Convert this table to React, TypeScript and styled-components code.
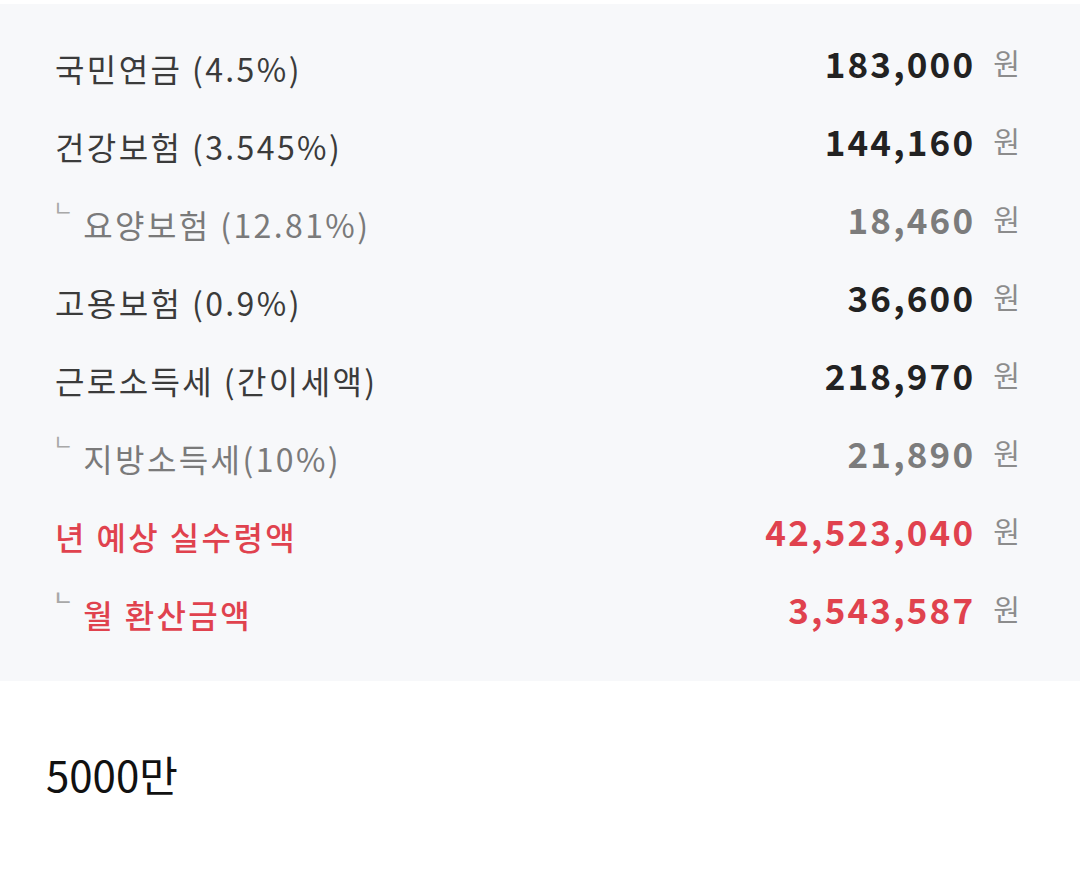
import * as React from 'react';
import styled, { createGlobalStyle } from 'styled-components';

const GlobalStyle = createGlobalStyle`
  html, body {
    margin: 0;
    padding: 0;
    background: #ffffff;
  }
  body {
    font-family: 'Noto Sans CJK KR', 'Noto Sans', sans-serif;
  }
`;

type Tone = 'main' | 'sub' | 'red';

const labelColor: Record<Tone, string> = {
  main: '#3b3b3b',
  sub: '#7a7a7a',
  red: '#e0424e',
};

const amountColor: Record<Tone, string> = {
  main: '#222222',
  sub: '#7c7c7c',
  red: '#e0424e',
};

const Panel = styled.section`
  margin-top: 4px;
  background-color: #f7f8fa;
  padding: 19px 60px 34px 55px;
`;

const Row = styled.div`
  display: flex;
  align-items: center;
  justify-content: space-between;
  height: 78px;
`;

const Label = styled.div<{ $tone: Tone }>`
  display: flex;
  align-items: flex-start;
  padding-top: 12px;
  font-size: 32px;
  letter-spacing: 2.4px;
  color: ${(p) => labelColor[p.$tone]};
  font-weight: ${(p) => (p.$tone === 'red' ? 500 : 400)};
  white-space: nowrap;
`;

const Branch = styled.span`
  font-size: 22px;
  line-height: 1;
  color: #a8a8a8;
  margin: -6px 10px 0 -2px;
  letter-spacing: 0;
`;

const AmountBox = styled.div`
  display: flex;
  align-items: center;
  gap: 18px;
`;

const Amount = styled.span<{ $tone: Tone }>`
  font-size: 35px;
  font-weight: 700;
  letter-spacing: 2.2px;
  color: ${(p) => amountColor[p.$tone]};
`;

const Won = styled.span`
  font-size: 29px;
  color: #8c8c8c;
`;

const Caption = styled.p`
  margin: 64px 0 0;
  padding-left: 46px;
  font-size: 42px;
  line-height: 58px;
  color: #111111;
`;

interface Item {
  label: string;
  amount: string;
  tone: Tone;
  branch?: boolean;
}

const items: Item[] = [
  { label: '국민연금 (4.5%)', amount: '183,000', tone: 'main' },
  { label: '건강보험 (3.545%)', amount: '144,160', tone: 'main' },
  { label: '요양보험 (12.81%)', amount: '18,460', tone: 'sub', branch: true },
  { label: '고용보험 (0.9%)', amount: '36,600', tone: 'main' },
  { label: '근로소득세 (간이세액)', amount: '218,970', tone: 'main' },
  { label: '지방소득세(10%)', amount: '21,890', tone: 'sub', branch: true },
  { label: '년 예상 실수령액', amount: '42,523,040', tone: 'red' },
  { label: '월 환산금액', amount: '3,543,587', tone: 'red', branch: true },
];

export default function App() {
  return (
    <>
      <GlobalStyle />
      <Panel>
        {items.map((it) => (
          <Row key={it.label}>
            <Label $tone={it.tone}>
              {it.branch && <Branch>ㄴ</Branch>}
              {it.label}
            </Label>
            <AmountBox>
              <Amount $tone={it.tone}>{it.amount}</Amount>
              <Won>원</Won>
            </AmountBox>
          </Row>
        ))}
      </Panel>
      <Caption>5000만</Caption>
    </>
  );
}
